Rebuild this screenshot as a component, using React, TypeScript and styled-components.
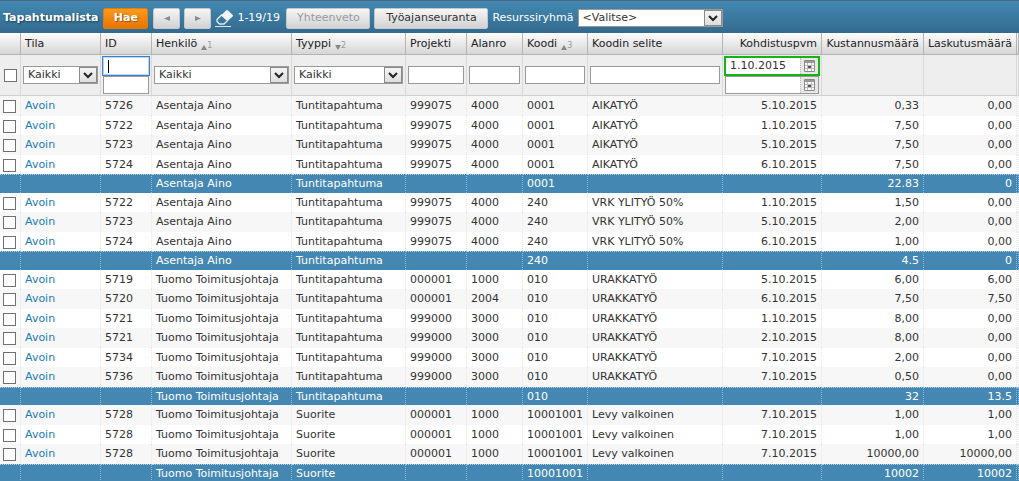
import React from 'react';
import styled, { createGlobalStyle, css } from 'styled-components';

const GlobalStyle = createGlobalStyle`
  *, *::before, *::after { box-sizing: border-box; }
  body {
    margin: 0;
    background: #fff;
    color: #333;
    font: 11px/14px Verdana, "DejaVu Sans", sans-serif;
  }
  button, input, select { font: inherit; color: inherit; margin: 0; }
`;

const Page = styled.main`
  overflow: hidden;
`;

const Toolbar = styled.header`
  display: flex;
  align-items: center;
  height: 33px;
  padding: 2px 3px 0;
  border-top: 1px solid #4c6480;
  background: linear-gradient(#4389b2, #336a8e);
  color: #fff;
  white-space: nowrap;
`;

const Title = styled.h1`
  margin: 0 5px 0 0;
  font-size: 11px;
  line-height: 14px;
  text-shadow: 1px 1px 2px #1d3f57;
`;

const buttonLook = {
  primary: css`
    width: 45px;
    margin-right: 5px;
    background: linear-gradient(#fb9a1c, #ea7400);
    border-color: #e07c14;
    color: #fff;
    font-weight: bold;
    text-shadow: 1px 1px 1px #9a5000;
  `,
  arrow: css`
    width: 27px;
    margin-right: 4px;
    color: #999;
  `,
  muted: css`
    width: 84px;
    margin-right: 4px;
    color: #999;
  `,
  plain: css`
    width: 114px;
    margin-right: 4px;
  `,
};

const Button = styled.button<{ $look: keyof typeof buttonLook }>`
  display: flex;
  align-items: center;
  justify-content: center;
  flex: none;
  height: 21px;
  padding: 0;
  border: 1px solid #c4c8cb;
  border-radius: 2px;
  background: linear-gradient(#f6f6f6, #d2d2d2);
  color: #333;
  ${(p) => buttonLook[p.$look]}
`;

const ClearButton = styled.button`
  display: flex;
  flex: none;
  padding: 0;
  margin-right: 3px;
  border: 0;
  background: none;
`;

const Count = styled.span`
  min-width: 49px;
`;

const GroupLabel = styled.label`
  display: flex;
  align-items: center;
  gap: 4px;
`;

const SelectFrame = styled.span<{ $wide?: boolean }>`
  display: grid;
  grid-template-columns: 1fr 18px;
  width: ${(p) => (p.$wide ? '145px' : 'auto')};
  height: 18px;
  border: 1px solid #9a9a9a;
  background: #fff;
  color: #333;

  select {
    grid-area: 1 / 1 / 2 / 3;
    width: 100%;
    min-width: 0;
    height: 16px;
    padding: 0 18px 0 4px;
    border: 0;
    background: none;
    appearance: none;
    outline: 0;
  }
`;

const SelectArrow = styled.span`
  grid-area: 1 / 2;
  display: flex;
  align-items: center;
  justify-content: center;
  border: 1px solid #8a8a8a;
  background: linear-gradient(#f4f4f4, #dedede);
  pointer-events: none;
`;

const Table = styled.table`
  width: 100%;
  min-width: 960px;
  table-layout: fixed;
  border-collapse: separate;
  border-spacing: 0;
`;

const Col = styled.col<{ $w?: number }>`
  width: ${(p) => (p.$w ? `${p.$w}px` : 'auto')};
`;

const HeadCell = styled.th<{ $right?: boolean }>`
  height: 22px;
  padding: 0 4px;
  border-right: 1px solid #b4b4b4;
  border-bottom: 1px solid #b4b4b4;
  background: linear-gradient(#fdfdfd, #d6d6d6);
  color: #222;
  font-weight: normal;
  text-align: ${(p) => (p.$right ? 'right' : 'left')};
  white-space: nowrap;
`;

const HeadLabel = styled.span<{ $right?: boolean }>`
  display: flex;
  align-items: center;
  justify-content: ${(p) => (p.$right ? 'flex-end' : 'flex-start')};
  gap: 4px;
`;

const Sort = styled.span`
  display: flex;
  align-items: flex-end;
  padding-top: 4px;
  color: #999;
  font-size: 8px;
  line-height: 8px;
`;

const FilterCell = styled.td<{ $range?: boolean }>`
  height: 41px;
  padding: ${(p) => (p.$range ? '0 1px' : '0 2px')};
  border-right: 1px solid #d8d8d8;
  border-bottom: 1px solid #d0d0d0;
  background: #eee;
`;

const FilterCheckCell = styled(FilterCell)`
  padding: 1px 0 0 4px;
`;

const TextInput = styled.input`
  display: block;
  width: 100%;
  height: 18px;
  padding: 0 4px;
  border: 1px solid #999;
  border-radius: 0;
  background: #fff;
  outline: 0;
`;

const Range = styled.div`
  display: flex;
  flex-direction: column;
`;

const RangeEnd = styled.div`
  padding: 0 1px;
`;

const FocusInput = styled(TextInput)`
  height: 20px;
  border-color: #3f7fd0;
  box-shadow: inset 0 0 0 1px #b8d4f4;
  background: linear-gradient(#000, #000) 5px center / 1px 13px no-repeat #fff;
  caret-color: transparent;
`;

const DateBox = styled.span<{ $active?: boolean }>`
  display: flex;
  height: ${(p) => (p.$active ? '20px' : '18px')};
  border: ${(p) => (p.$active ? '2px solid #14b414' : '1px solid #999')};
  background: #fff;

  input {
    flex: 1;
    min-width: 0;
    padding: 0 4px;
    border: 0;
    background: none;
    outline: 0;
  }

  button {
    display: flex;
    align-items: center;
    justify-content: center;
    width: 18px;
    padding: 0;
    border: 0;
    border-left: 1px dotted #bbb;
    background: #e8e8e8;
  }
`;

const Check = styled.input`
  display: block;
  width: 13px;
  height: 13px;
  margin: 0;
  border: 1px solid #707070;
  background: #fff;
  appearance: none;
`;

const Cell = styled.td<{ $right?: boolean }>`
  padding: 0 4px;
  border-right: 1px dotted #e8e8e8;
  text-align: ${(p) => (p.$right ? 'right' : 'left')};
  white-space: nowrap;
`;

const CheckCell = styled(Cell)`
  padding: 1px 0 0 3px;
`;

const Row = styled.tr`
  height: 19px;
  &:nth-child(odd) { height: 20px; background: #f7f7f7; }
`;

const SummaryRow = styled.tr`
  height: 18px;
  background: #4487b2;
  color: #fff;
  &:nth-child(odd) { height: 19px; }
  td {
    border-top: 1px dotted #b4d0e2;
    border-right-color: #8fb8d2;
  }
`;

const StatusLink = styled.a`
  color: #1a7bb8;
  text-decoration: none;
`;

const Chevron = () => (
  <svg width="10" height="7" viewBox="0 0 10 7" aria-hidden="true">
    <path d="M1 1l4 4 4-4" fill="none" stroke="#222" strokeWidth="2" />
  </svg>
);

const Eraser = () => (
  <svg width="19" height="18" viewBox="0 0 19 18" aria-hidden="true">
    <path d="M0 17.5h16" stroke="#d8e6f0" />
    <path d="M2 10.500L6.500 6l6 5.500L9 15H4.500L2 12.500z" fill="none" stroke="#e4eef5" strokeWidth="1.300" />
    <path d="M6.500 6L11 1.500q1-1 2 0l4.500 4.300q1 1 0 2L12.500 12z" fill="#eef4f8" />
  </svg>
);

const Arrow = ({ left }: { left?: boolean }) => (
  <svg width="6" height="5" viewBox="0 0 6 5" aria-hidden="true">
    <path d={left ? 'M6 0v5L0 2.500z' : 'M0 0v5l6-2.500z'} fill="#8c8c8c" />
  </svg>
);

const SortArrow = ({ down }: { down?: boolean }) => (
  <svg width="6" height="5" viewBox="0 0 6 5" aria-hidden="true">
    <path d={down ? 'M0 0h6L3 5z' : 'M0 5h6L3 0z'} fill="#888" />
  </svg>
);

const CalendarIcon = () => (
  <svg width="11" height="12" viewBox="0 0 11 12" aria-hidden="true">
    <path d="M.5.5h10v11H.5z" fill="#fafafa" stroke="#8a8a8a" />
    <path d="M1 2h9" stroke="#999" strokeWidth="2" />
    <path d="M1 5.500h9M1 8.500h9M3.500 3v8M7.500 3v8" stroke="#bbb" />
    <path d="M4 6h3v2H4z" fill="#555" />
  </svg>
);

const Select = ({ id, label, value, wide }: { id: string; label?: string; value: string; wide?: boolean }) => (
  <SelectFrame $wide={wide}>
    <select id={id} aria-label={label} defaultValue={value}>
      <option>{value}</option>
    </select>
    <SelectArrow><Chevron /></SelectArrow>
  </SelectFrame>
);

type Column = { name: string; width?: number; right?: boolean; sort?: number; down?: boolean };

const columns: Column[] = [
  { name: 'Tila', width: 80 },
  { name: 'ID', width: 51 },
  { name: 'Henkilö', width: 140, sort: 1 },
  { name: 'Tyyppi', width: 114, sort: 2, down: true },
  { name: 'Projekti', width: 61 },
  { name: 'Alanro', width: 56 },
  { name: 'Koodi', width: 65, sort: 3 },
  { name: 'Koodin selite' },
  { name: 'Kohdistuspvm', width: 99, right: true },
  { name: 'Kustannusmäärä', width: 102, right: true },
  { name: 'Laskutusmäärä', width: 93, right: true },
];

const AINO = 'Asentaja Aino';
const TUOMO = 'Tuomo Toimitusjohtaja';
const TUNTI = 'Tuntitapahtuma';

const event = (...cells: string[]) => ['Avoin', ...cells];
const summary = (who: string, type: string, code: string, cost: string, bill: string) =>
  ['', '', who, type, '', '', code, '', '', cost, bill];

const rows: string[][] = [
  event('5726', AINO, TUNTI, '999075', '4000', '0001', 'AIKATYÖ', '5.10.2015', '0,33', '0,00'),
  event('5722', AINO, TUNTI, '999075', '4000', '0001', 'AIKATYÖ', '1.10.2015', '7,50', '0,00'),
  event('5723', AINO, TUNTI, '999075', '4000', '0001', 'AIKATYÖ', '5.10.2015', '7,50', '0,00'),
  event('5724', AINO, TUNTI, '999075', '4000', '0001', 'AIKATYÖ', '6.10.2015', '7,50', '0,00'),
  summary(AINO, TUNTI, '0001', '22.83', '0'),
  event('5722', AINO, TUNTI, '999075', '4000', '240', 'VRK YLITYÖ 50%', '1.10.2015', '1,50', '0,00'),
  event('5723', AINO, TUNTI, '999075', '4000', '240', 'VRK YLITYÖ 50%', '5.10.2015', '2,00', '0,00'),
  event('5724', AINO, TUNTI, '999075', '4000', '240', 'VRK YLITYÖ 50%', '6.10.2015', '1,00', '0,00'),
  summary(AINO, TUNTI, '240', '4.5', '0'),
  event('5719', TUOMO, TUNTI, '000001', '1000', '010', 'URAKKATYÖ', '5.10.2015', '6,00', '6,00'),
  event('5720', TUOMO, TUNTI, '000001', '2004', '010', 'URAKKATYÖ', '6.10.2015', '7,50', '7,50'),
  event('5721', TUOMO, TUNTI, '999000', '3000', '010', 'URAKKATYÖ', '1.10.2015', '8,00', '0,00'),
  event('5721', TUOMO, TUNTI, '999000', '3000', '010', 'URAKKATYÖ', '2.10.2015', '8,00', '0,00'),
  event('5734', TUOMO, TUNTI, '999000', '3000', '010', 'URAKKATYÖ', '7.10.2015', '2,00', '0,00'),
  event('5736', TUOMO, TUNTI, '999000', '3000', '010', 'URAKKATYÖ', '7.10.2015', '0,50', '0,00'),
  summary(TUOMO, TUNTI, '010', '32', '13.5'),
  event('5728', TUOMO, 'Suorite', '000001', '1000', '10001001', 'Levy valkoinen', '7.10.2015', '1,00', '1,00'),
  event('5728', TUOMO, 'Suorite', '000001', '1000', '10001001', 'Levy valkoinen', '7.10.2015', '1,00', '1,00'),
  event('5728', TUOMO, 'Suorite', '000001', '1000', '10001001', 'Levy valkoinen', '7.10.2015', '10000,00', '10000,00'),
  summary(TUOMO, 'Suorite', '10001001', '10002', '10002'),
];

export default function App() {
  return (
    <Page>
      <GlobalStyle />
      <Toolbar>
        <Title>Tapahtumalista</Title>
        <Button $look="primary">Hae</Button>
        <Button $look="arrow" aria-label="Edellinen"><Arrow left /></Button>
        <Button $look="arrow" aria-label="Seuraava"><Arrow /></Button>
        <ClearButton aria-label="Tyhjennä"><Eraser /></ClearButton>
        <Count>1-19/19</Count>
        <Button $look="muted" disabled>Yhteenveto</Button>
        <Button $look="plain">Työajanseuranta</Button>
        <GroupLabel htmlFor="group">
          Resurssiryhmä
          <Select id="group" value="<Valitse>" wide />
        </GroupLabel>
      </Toolbar>
      <Table>
        <colgroup>
          <Col $w={21} />
          {columns.map((c) => <Col key={c.name} $w={c.width} />)}
          <Col $w={2} />
        </colgroup>
        <thead>
          <tr>
            <HeadCell as="td" />
            {columns.map((c) => (
              <HeadCell key={c.name}>
                <HeadLabel $right={c.right}>
                  {c.name}
                  {c.sort && <Sort><SortArrow down={c.down} />{c.sort}</Sort>}
                </HeadLabel>
              </HeadCell>
            ))}
            <HeadCell as="td" />
          </tr>
          <tr>
            <FilterCheckCell><Check type="checkbox" aria-label="Valitse kaikki" /></FilterCheckCell>
            <FilterCell><Select id="state" label="Tila" value="Kaikki" /></FilterCell>
            <FilterCell $range>
              <Range>
                <FocusInput aria-label="ID alkaen" />
                <RangeEnd><TextInput aria-label="ID asti" /></RangeEnd>
              </Range>
            </FilterCell>
            <FilterCell><Select id="person" label="Henkilö" value="Kaikki" /></FilterCell>
            <FilterCell><Select id="type" label="Tyyppi" value="Kaikki" /></FilterCell>
            <FilterCell><TextInput aria-label="Projekti" /></FilterCell>
            <FilterCell><TextInput aria-label="Alanro" /></FilterCell>
            <FilterCell><TextInput aria-label="Koodi" /></FilterCell>
            <FilterCell><TextInput aria-label="Koodin selite" /></FilterCell>
            <FilterCell $range>
              <Range>
                <DateBox $active>
                  <input aria-label="Kohdistuspvm alkaen" defaultValue="1.10.2015" />
                  <button aria-label="Kalenteri"><CalendarIcon /></button>
                </DateBox>
                <RangeEnd>
                  <DateBox>
                    <input aria-label="Kohdistuspvm asti" />
                    <button aria-label="Kalenteri"><CalendarIcon /></button>
                  </DateBox>
                </RangeEnd>
              </Range>
            </FilterCell>
            <FilterCell />
            <FilterCell />
            <FilterCell />
          </tr>
        </thead>
        <tbody>
          {rows.map((cells, i) => {
            const open = cells[0] !== '';
            const Line = open ? Row : SummaryRow;
            return (
              <Line key={i}>
                <CheckCell>{open && <Check type="checkbox" aria-label={`Valitse ${cells[1]}`} />}</CheckCell>
                {cells.map((text, j) => (
                  <Cell key={j} $right={columns[j].right}>
                    {j === 0 && open ? <StatusLink href="#">{text}</StatusLink> : text}
                  </Cell>
                ))}
                <Cell />
              </Line>
            );
          })}
        </tbody>
      </Table>
    </Page>
  );
}
